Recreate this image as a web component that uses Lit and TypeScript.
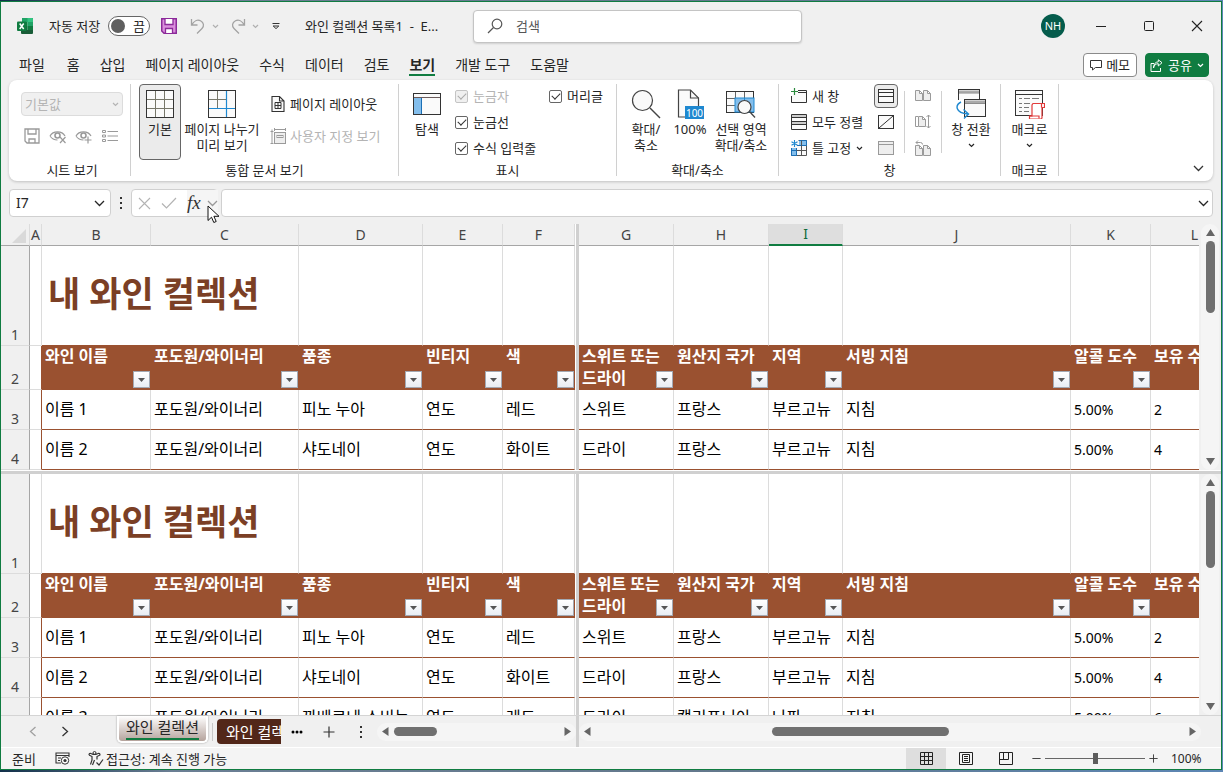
import { LitElement, html, svg, css, nothing, TemplateResult } from "lit";
import { customElement, property } from "lit/decorators.js";
import { classMap } from "lit/directives/class-map.js";
import { styleMap } from "lit/directives/style-map.js";

/* ---------- icons ---------- */

const dark = "#333";
const grey = "#9a9a9a";
const blue = "#1e88d0";

const page = (x: number, y: number, c: string) => svg`
  <path d="M${x + 0.5} ${y + 0.5}h4l3 3v7h-7zM${x + 4.5} ${y + 0.5}v3h3" fill="#eee" stroke=${c}></path>`;

const icons: Record<string, [number, number, TemplateResult]> = {
  excel: [16, 16, svg`
    <path d="M5 0h11v4H5z" fill="#21a366"/><path d="M10.500 0H15a1 1 0 0 1 1 1v3h-5.500z" fill="#33c481"/>
    <path d="M4 4h6.500v4H4z" fill="#107c41"/><path d="M10.500 4H16v4h-5.500z" fill="#21a366"/>
    <path d="M4 8h6.500v4H4z" fill="#0f6b39"/><path d="M10.500 8H16v4h-5.500z" fill="#107c41"/>
    <path d="M4 12h12v3a1 1 0 0 1-1 1H5a1 1 0 0 1-1-1z" fill="#185c37"/>
    <rect y="3.500" width="9.500" height="9.500" rx="1" fill="#107c41"/>
    <path d="M2.700 5.500l4 5.500M6.700 5.500l-4 5.500" stroke="#fff" stroke-width="1.500" fill="none"/>`],
  save: [16, 16, svg`
    <path d="M.75.75h14.500v14.500H3L.75 13z" fill="#da8fdc" stroke="#8c2a9a" stroke-width="1.500"/>
    <path d="M4 1v5.500h8V1M4.500 15v-4.500h7V15" fill="#fff" stroke="#8c2a9a" stroke-width="1.300"/>`],
  undo: [16, 16, svg`<path d="M1.500 1v6h6M1.800 6.700C4 3 7.500 1.200 10.500 2.800c3.500 1.800 3.800 5.400 1.500 7.700L7 15.500" fill="none" stroke="#a3a3a3" stroke-width="1.300"/>`],
  redo: [16, 16, svg`<path d="M14.500 1v6h-6M14.200 6.700C12 3 8.500 1.200 5.500 2.800c-3.500 1.800-3.800 5.400-1.500 7.700L9 15.500" fill="none" stroke="#a3a3a3" stroke-width="1.300"/>`],
  chevS: [7, 5, svg`<path d="M1 1l2.500 2.500L6 1" fill="none" stroke="currentColor" stroke-width="1.200"/>`],
  chev: [11, 7, svg`<path d="M1 1l4.500 4.500L10 1" fill="none" stroke="currentColor" stroke-width="1.300"/>`],
  more: [8, 8, svg`<path d="M.5 1.500h7M1.200 4L4 6.600 6.800 4z" fill="none" stroke="#333"/>`],
  search: [16, 16, svg`<circle cx="10" cy="6" r="4.800" fill="none" stroke="#555" stroke-width="1.200"/><path d="M6.500 9.500L1 15" stroke="#555" stroke-width="1.200"/>`],
  min: [12, 12, svg`<path d="M1 6.500h10" stroke="#222"/>`],
  max: [12, 12, svg`<rect x="1.500" y="1.500" width="9" height="9" rx="1" fill="none" stroke="#222"/>`],
  close: [12, 12, svg`<path d="M1 1l10 10M11 1L1 11" stroke="#222" stroke-width="1.100"/>`],
  memo: [12, 12, svg`<path d="M.5 1.500h11v7H5.500L2.500 11V8.500h-2z" fill="none" stroke="#333"/>`],
  share: [13, 13, svg`<path d="M4 4.500H1v8h9.500V9M3.500 9C4 6 6 4.700 8.300 4.700V7L12 3.700 8.300.8v2C5.500 3 3.500 5 3.500 9z" fill="none" stroke="#fff"/>`],
  svSave: [16, 16, svg`<path d="M1 1h14v14H3l-2-2zM4 1v5h8V1M5 15v-4h6v4" fill="none" stroke=${grey} stroke-width="1.300"/>`],
  eyeX: [18, 16, svg`<path d="M1 8c3-5.500 12-5.500 15 0M1 8c2 3 5 4 7.500 4" fill="none" stroke=${grey} stroke-width="1.200"/><circle cx="8.500" cy="7.500" r="2.500" fill="none" stroke=${grey} stroke-width="1.600"/><path d="M11 9l5.500 6M16.500 9L11 15" stroke=${grey} stroke-width="1.200"/>`],
  eyeP: [18, 16, svg`<path d="M1 8c3-5.500 12-5.500 15 0M1 8c2 3 5 4 7.500 4" fill="none" stroke=${grey} stroke-width="1.200"/><circle cx="8.500" cy="7.500" r="2.500" fill="none" stroke=${grey} stroke-width="1.600"/><path d="M13 8.500v7M9.500 12h7" stroke=${grey} stroke-width="1.200"/>`],
  list: [16, 14, svg`<path d="M.5 1.500h3v2h-3zM.5 6h3v2h-3zM.5 10.500h3v2h-3z" fill="none" stroke=${grey}/><path d="M5.500 2.500H16M5.500 7H16M5.500 11.500H16" stroke=${grey} stroke-width="1.200"/>`],
  normal: [28, 28, svg`<rect x=".5" y=".5" width="27" height="27" fill="#fafafa" stroke=${dark}/><path d="M9.500 1v26M18.500 1v26M1 9.500h26M1 18.500h26" stroke="#77776a"/><rect x=".5" y=".5" width="27" height="27" fill="none" stroke=${dark}/>`],
  breaks: [28, 28, svg`<rect x=".5" y=".5" width="27" height="27" fill="#fafafa"/><path d="M9.500 1v17M1 9.500h17" stroke="#77776a"/><path d="M18.500 1v26M1 18.500h26" stroke=${blue} stroke-width="1.200"/><rect x=".5" y=".5" width="27" height="27" fill="none" stroke=${dark}/>`],
  layout: [13, 16, svg`<path d="M.5.5h7.500l4.500 4.500v10.500H.5zM8 .5V5h4.500" fill="#fafafa" stroke=${dark} stroke-width="1.100"/><path d="M3.500 6.500h6v6h-6zM6.500 6.500v6M3.500 9.500h6" fill="none" stroke=${dark}/>`],
  custom: [16, 16, svg`<path d="M2 1.500v14M.5 3.500h3M.5 15.500h3M4 1.500h12M4.500 0v3M15.500 0v3" stroke=${grey} fill="none"/><rect x="4.500" y="4.500" width="11" height="11" fill="#eee" stroke=${grey}/><rect x="7" y="7.500" width="6" height="2" fill="none" stroke=${grey}/>`],
  nav: [28, 22, svg`<rect x=".5" y=".5" width="27" height="21" fill="#fafafa" stroke=${dark}/><path d="M1 4.500h26" stroke="#6b5b5b"/><rect x="1" y="5" width="8" height="16" fill="#83beec"/><path d="M8.500 5v16" stroke="#1b6fb5"/>`],
  zoom: [30, 30, svg`<circle cx="11.500" cy="11.500" r="10" fill="#fafafa" stroke="#444" stroke-width="1.200"/><path d="M19 19l10 10" stroke="#444" stroke-width="1.400"/>`],
  z100: [28, 30, svg`<path d="M2.500 1h12l8 8v19h-20z" fill="#fafafa" stroke="#444" stroke-width="1.200"/><path d="M14.500 1v8h8" fill="none" stroke="#444" stroke-width="1.200"/><rect x="9" y="17" width="19" height="13" fill=${blue}/><text x="18.500" y="27.500" font-size="10" text-anchor="middle" fill="#fff" font-family="Noto Sans">100</text>`],
  zsel: [30, 28, svg`<rect x=".5" y="1.500" width="27" height="21" fill="#fafafa" stroke=${dark}/><path d="M9.500 2v20M18.500 2v20M1 8.500h26M1 15.500h26" stroke="#666"/><rect x="9" y="8" width="19" height="14" fill="#83beec" stroke=${blue}/><path d="M18.500 8v14" stroke=${blue}/><circle cx="18.500" cy="17" r="6.500" fill="#fafafa" stroke="#444" stroke-width="1.200"/><path d="M23.500 21.500l5.500 6" stroke="#444" stroke-width="1.300"/>`],
  newWin: [16, 16, svg`<path d="M7 2.500h8.500v12H.5V8" fill="#fafafa" stroke=${dark}/><path d="M7 4.500h8.500" stroke=${dark}/><path d="M3.500 0v7M0 3.500h7" stroke="#2b8a3e" stroke-width="1.200"/>`],
  arrange: [16, 16, svg`<path d="M.5.5h15v15H.5z" fill="#fafafa" stroke=${dark}/><path d="M1 2h14M1 9h14" stroke="#ccc" stroke-width="2"/><path d="M.5 3.500h15M.5 7.500h15M.5 10.500h15" stroke=${dark}/>`],
  freeze: [16, 16, svg`<path d="M7.500.5h8v15H.5V8" fill="#fafafa" stroke="#555"/><path d="M8 .5h7.500v5H8z" fill="#83beec"/><path d="M.5 8h5v7.500h-5z" fill="#83beec"/><path d="M6 5.500h9.500M8 .5h7.500v5M.5 8v7.500h5M5.500 8v7.500M.5 10.500h5" fill="none" stroke="#1b6fb5"/><path d="M5.500 10.500h10M10.500 5.500v10M10.500 .5v5" stroke="#555"/><path d="M3.500 0v7M.5 1.700l6 3.600M6.500 1.700l-6 3.600" stroke=${blue} stroke-width="1.100"/>`],
  split: [16, 14, svg`<rect x=".5" y=".5" width="15" height="13" fill="#fafafa" stroke=${dark}/><path d="M1 3.500h14M1 7.500h14" stroke=${dark}/>`],
  hide: [16, 14, svg`<rect x=".5" y=".5" width="15" height="13" fill="#fafafa" stroke=${dark}/><path d="M1 13L15 1" stroke=${dark}/>`],
  unhide: [16, 14, svg`<rect x=".5" y=".5" width="15" height="13" fill="#eee" stroke=${grey}/><path d="M1 3.500h14" stroke=${grey}/>`],
  side: [16, 12, svg`${page(0, 0, grey)}${page(8, 0, grey)}`],
  sync: [16, 16, svg`<path d="M3 2.500H.5v10H3" fill="none" stroke=${grey}/>${page(3, 2, grey)}<path d="M13.500 1v13M11.500 3l2-2 2 2M11.500 12l2 2 2-2" fill="none" stroke=${grey}/>`],
  reset: [16, 16, svg`${page(0, 5, grey)}${page(8, 5, grey)}<path d="M1 2.500h4.500q2 0 2 2M3 .5l-2 2 2 2" fill="none" stroke=${grey}/>`],
  switch: [30, 30, svg`<rect x="2.500" y=".5" width="21" height="15" fill="#fafafa" stroke=${dark}/><path d="M3 2.500h20" stroke="#aaa" stroke-width="2"/><path d="M3 4h20" stroke=${dark} stroke-width=".6"/><path d="M1 11h10v14H1z" fill="#fff"/><rect x="8.500" y="10.500" width="21" height="17" fill="#fafafa" stroke=${dark}/><path d="M9 12.500h20" stroke="#aaa" stroke-width="2"/><path d="M9 14.200h20" stroke=${dark} stroke-width=".8"/><path d="M5 13C-1 16-1 24 12 25M7.500 20.500L12.500 25 8 29.500" fill="none" stroke=${blue} stroke-width="1.400"/>`],
  macro: [30, 30, svg`<rect x=".5" y="1.500" width="27" height="25" fill="#fafafa" stroke=${dark}/><path d="M1 5.500h26" stroke=${dark}/><path d="M4 9.500h3M9 9.500h6M17 9.500h7M4 14.500h3M9 14.500h6M4 18.500h3M9 18.500h5M4 22.500h3M9 22.500h5" stroke="#777"/><path d="M18 14.500h11.500v4H27v10q0 1.500-1.500 1.500H14.500v-3H17V16z" fill="#fff" stroke="#e23b3b" stroke-width="1.200"/><path d="M18 14.500h8.500v4M14.500 27H24v2.500" fill="none" stroke="#e23b3b" stroke-width="1.200"/>`],
  cancel: [13, 13, svg`<path d="M1 1l11 11M12 1L1 12" stroke="#b3b3b3" stroke-width="1.100"/>`],
  accept: [16, 12, svg`<path d="M1 6.500L5.500 11 15 1" fill="none" stroke="#b3b3b3" stroke-width="1.200"/>`],
  dots: [4, 14, svg`<path d="M1 2h2M1 7h2M1 12h2" stroke="#333" stroke-width="2"/>`],
  left: [8, 11, svg`<path d="M6.500 1L1.500 5.500l5 4.500" fill="none" stroke="#a0a0a0" stroke-width="1.300"/>`],
  right: [8, 11, svg`<path d="M1.500 1l5 4.500-5 4.500" fill="none" stroke="#333" stroke-width="1.300"/>`],
  ell: [12, 4, svg`<circle cx="2" cy="2" r="1.500"/><circle cx="6" cy="2" r="1.500"/><circle cx="10" cy="2" r="1.500"/>`],
  plus: [12, 12, svg`<path d="M6 .5v11M.5 6h11" stroke="#333" stroke-width="1.200"/>`],
  minus: [12, 12, svg`<path d="M.5 6h11" stroke="#333" stroke-width="1.200"/>`],
  triL: [7, 9, svg`<path d="M6.500 0v9L0 4.500z" fill="#666"/>`],
  triR: [7, 9, svg`<path d="M.5 0v9L7 4.500z" fill="#666"/>`],
  triU: [9, 7, svg`<path d="M0 7h9L4.500 0z" fill="#666"/>`],
  triD: [9, 7, svg`<path d="M0 0h9L4.500 7z" fill="#666"/>`],
  filter: [7, 4, svg`<path d="M0 0h7L3.500 4z" fill="#555"/>`],
  corner: [14, 14, svg`<path d="M14 0v14H0z" fill="#d9d9d9"/>`],
  record: [15, 13, svg`<path d="M14 5V1H1v10h5M1 3.500h13M3 6h3M3 8.500h2" fill="none" stroke="#333" stroke-width="1.100"/><circle cx="10" cy="8.500" r="3.700" fill="#fff" stroke="#333"/><circle cx="10" cy="8.500" r="1.600" fill="#333"/>`],
  access: [16, 15, svg`<path d="M1 4c0-1.500 1-2 2-1.500l2 .8h3l2-.8c1-.5 2 0 2 1.500L9 5.500v3M1 4l3 1.500V9l-1.500 4.500M6.500 9l-2 5" fill="none" stroke="#333" stroke-width="1.200"/><circle cx="6.500" cy="2" r="1.500" fill="none" stroke="#333"/><path d="M8.500 11.500l2.500 2.500 4-5.500" fill="none" stroke="#333" stroke-width="1.200"/>`],
  vNormal: [13, 13, svg`<path d="M.5.5h12v12H.5zM4.500.5v12M8.500.5v12M.5 4.500h12M.5 8.500h12" fill="none" stroke="#222"/>`],
  vPage: [14, 13, svg`<path d="M.5.5h13v12H.5zM3.500 2.500h7v8h-7zM5 4.500h4M5 6.500h4M5 8.500h4" fill="none" stroke="#222"/>`],
  vBreak: [14, 13, svg`<path d="M.5.5h13v12H.5zM.5 7.500h9M4.500.5v7M9.500.5v7" fill="none" stroke="#222"/>`],
  pointer: [13, 19, svg`<path d="M1 1v14.500l3.500-3.300 2.300 5.300 2.400-1-2.300-5.200H12z" fill="#fff" stroke="#111"/>`],
};

const icon = (name: string) => {
  const [w, h, body] = icons[name];
  return html`<svg width=${w} height=${h} viewBox="0 0 ${w} ${h}" aria-hidden="true">${body}</svg>`;
};

const base = css`
  :host {
    display: block;
    box-sizing: border-box;
    min-width: 0;
  }
  * {
    box-sizing: border-box;
  }
  svg {
    display: block;
    flex: none;
  }
  button,
  input,
  select {
    font: inherit;
    color: inherit;
    margin: 0;
    padding: 0;
    border: 0;
    background: none;
    border-radius: 0;
    outline: none;
  }
  button {
    display: flex;
    align-items: center;
    justify-content: center;
    white-space: nowrap;
  }
`;

/* ---------- title bar and tabs ---------- */

@customElement("title-bar")
class TitleBar extends LitElement {
  static styles = [base, css`
    .bar { display: flex; align-items: center; height: 48px; }
    .left { display: flex; align-items: center; width: 472px; flex: none; padding-left: 16px; }
    .label { margin: 0 7px 0 16px; width: 52px; white-space: nowrap; }
    .toggle { display: flex; align-items: center; gap: 8px; width: 42px; height: 20px; padding: 0 2px; border: 1px solid #666; border-radius: 10px; background: #fff; }
    .knob { appearance: none; width: 14px; height: 14px; border-radius: 7px; background: #5f5f5f; flex: none; }
    .save { margin: 0 13px 0 11px; }
    .dim { color: #b0b0b0; margin: 0 11px 0 6px; }
    .more { margin: 0 25px 0 2px; }
    .name { white-space: pre; }
    .search { display: flex; align-items: center; gap: 13px; width: 329px; height: 33px; padding: 0 13px; background: #fff; border: 1px solid #c4c4c4; border-radius: 4px; box-shadow: 0 1px 2px #0002; }
    .search input { flex: 1; min-width: 0; }
    .search input::placeholder { color: #555; opacity: 1; }
    .space { flex: 1; }
    .avatar { width: 24px; height: 24px; border-radius: 12px; background: #055c4c; color: #fff; font-size: 11px; margin-right: 12px; }
    .win { width: 48px; height: 32px; }
    .tabs { display: flex; align-items: center; gap: 20px; height: 30px; padding: 0 12px 0 18px; font-size: 14px; }
    .tab { height: 22px; padding-top: 2px; line-height: 18px; border-bottom: 2px solid transparent; }
    .tab.first { margin-right: 2px; }
    .tab.on { font-weight: 700; border-color: #107c41; }
    .actions { display: flex; gap: 8px; margin-left: auto; }
    .act { height: 24px; border: 1px solid #8a8a8a; border-radius: 4px; background: #fff; padding: 0 6px; gap: 4px; font-size: 13px; }
    .act.share { background: #107c41; border-color: #107c41; color: #fff; padding: 0 4px; gap: 5px; }
  `];
  render() {
    const tabs = ["파일", "홈", "삽입", "페이지 레이아웃", "수식", "데이터", "검토", "보기", "개발 도구", "도움말"];
    return html`
      <header class="bar">
        <div class="left">
          ${icon("excel")}
          <label class="label" for="auto">자동 저장</label>
          <label class="toggle"><input id="auto" class="knob" type="checkbox" role="switch" />끔</label>
          <button class="save" aria-label="저장">${icon("save")}</button>
          <button aria-label="실행 취소">${icon("undo")}</button>
          <button class="dim" aria-label="실행 취소 목록">${icon("chevS")}</button>
          <button aria-label="다시 실행">${icon("redo")}</button>
          <button class="dim" aria-label="다시 실행 목록">${icon("chevS")}</button>
          <button class="more" aria-label="빠른 실행 도구 모음">${icon("more")}</button>
          <span class="name">와인 컬렉션 목록1  -  E...</span>
        </div>
        <label class="search">${icon("search")}<input type="search" placeholder="검색" aria-label="검색" /></label>
        <div class="space"></div>
        <button class="avatar">NH</button>
        <button class="win" aria-label="최소화">${icon("min")}</button>
        <button class="win" aria-label="최대화">${icon("max")}</button>
        <button class="win" aria-label="닫기">${icon("close")}</button>
      </header>
      <nav class="tabs">
        ${tabs.map((t, i) => html`<button class=${classMap({ tab: true, first: i === 0, on: t === "보기" })}>${t}</button>`)}
        <div class="actions">
          <button class="act">${icon("memo")}메모</button>
          <button class="act share">${icon("share")}공유${icon("chevS")}</button>
        </div>
      </nav>`;
  }
}

/* ---------- ribbon ---------- */

@customElement("ribbon-bar")
class RibbonBar extends LitElement {
  static styles = [base, css`
    .ribbon { display: flex; height: 101px; margin: 0 8px; padding: 4px 0 0; background: #fff; border-radius: 8px; box-shadow: 0 1px 3px #0003; }
    .group { display: flex; flex-direction: column; flex: none; height: 92px; border-right: 1px solid #d0d0d0; }
    .body { display: flex; flex: 1; align-items: flex-start; }
    .cap { height: 16px; line-height: 16px; text-align: center; margin-bottom: -2px; }
    .g1 { width: 122px; } .g2 { width: 268px; } .g3 { width: 218px; }
    .g4 { width: 162px; } .g5 { width: 222px; } .g6 { width: 58px; }
    .g1 .body { flex-direction: column; padding: 8px 7px 0 12px; }
    .g1 .cap { padding-left: 5px; }
    .select { position: relative; width: 102px; color: #b4b4b4; }
    .select select { appearance: none; width: 100%; height: 24px; padding: 0 3px; background: #f0f0f0; border: 1px solid #dcdcdc; border-radius: 4px; opacity: 1; }
    .select svg { position: absolute; right: 4px; top: 10px; }
    .views { display: flex; justify-content: space-between; align-items: center; width: 94px; height: 16px; margin: 12px 0 0 3px; }
    .big { flex-direction: column; justify-content: flex-start; gap: 2px; line-height: 16px; height: 76px; padding-top: 4px; border: 1px solid transparent; border-radius: 4px; }
    .pic { display: flex; align-items: center; justify-content: center; height: 30px; }
    .chev { margin-top: 4px; }
    .sel { border-color: #666; background: #ebebeb; }
    .g2 .body { padding-left: 8px; }
    .g5 .body { padding-left: 12px; }
    .w30 { width: 30px; } .w42 { width: 42px; } .w56 { width: 56px; } .w58 { width: 58px; } .w72 { width: 72px; } .w82 { width: 82px; }
    .col { display: flex; flex-direction: column; }
    .views2 { padding: 4px 0 0 7px; }
    .views2 button { height: 32px; gap: 4px; justify-content: flex-start; }
    .views2 svg { width: 16px; }
    .off { color: #b4b4b4; }
    .checks { display: grid; grid-template-columns: 94px auto; grid-auto-rows: 26px; align-items: center; white-space: nowrap; }
    .check { display: flex; align-items: center; gap: 5px; height: 24px; align-self: start; }
    .check input { appearance: none; width: 13px; height: 13px; border: 1px solid #666; border-radius: 2px; display: grid; place-items: center; flex: none; }
    .check input::before { content: ""; width: 7px; height: 4px; border: solid #333; border-width: 0 0 1px 1px; transform: rotate(-45deg) translate(1px, -1px); }
    .check.off input { border-color: #c4c4c4; background: #f0f0f0; }
    .check.off input::before { border-color: #aaa; }
    .rows { gap: 2px; }
    .rows button { height: 24px; gap: 5px; justify-content: flex-start; }
    .rows.narrow button { width: 24px; justify-content: center; border: 1px solid transparent; border-radius: 4px; }
    .rows.narrow .sel { border-color: #666; }
    .first { width: 83px; }
    .line { width: 1px; height: 62px; margin: 7px 0 0 6px; background: #d0d0d0; }
    .l1 { margin-right: 6px; }
    .collapse { margin: auto 9px 9px auto; color: #333; }
  `];
  big(name: string, cls: string, lines: string[], chev = false) {
    return html`<button class="big ${cls}">
      <span class="pic">${icon(name)}</span>
      <span>${lines.map((l, i) => html`${i ? html`<br />` : nothing}${l}`)}</span>
      ${chev ? html`<span class="chev">${icon("chevS")}</span>` : nothing}
    </button>`;
  }
  check(text: string, off = false) {
    return html`<label class="check ${off ? "off" : ""}"><input type="checkbox" checked ?disabled=${off} />${text}</label>`;
  }
  render() {
    return html`<section class="ribbon">
      <div class="group g1">
        <div class="body">
          <div class="select"><select disabled aria-label="시트 보기"><option>기본값</option></select>${icon("chevS")}</div>
          <div class="views">${["svSave", "eyeX", "eyeP", "list"].map((n) => html`<button disabled>${icon(n)}</button>`)}</div>
        </div>
        <div class="cap">시트 보기</div>
      </div>
      <div class="group g2">
        <div class="body">
          ${this.big("normal", "w42 sel", ["기본"])}
          ${this.big("breaks", "w82", ["페이지 나누기", "미리 보기"])}
          <div class="col views2">
            <button>${icon("layout")}페이지 레이아웃</button>
            <button class="off" disabled>${icon("custom")}사용자 지정 보기</button>
          </div>
        </div>
        <div class="cap">통합 문서 보기</div>
      </div>
      <div class="group g3">
        <div class="body">
          ${this.big("nav", "w56", ["탐색"])}
          <div class="checks">
            ${this.check("눈금자", true)}${this.check("머리글")}
            ${this.check("눈금선")}<span></span>
            ${this.check("수식 입력줄")}
          </div>
        </div>
        <div class="cap">표시</div>
      </div>
      <div class="group g4">
        <div class="body">
          ${this.big("zoom", "w58", ["확대/", "축소"])}
          ${this.big("z100", "w30", ["100%"])}
          ${this.big("zsel", "w72", ["선택 영역", "확대/축소"])}
        </div>
        <div class="cap">확대/축소</div>
      </div>
      <div class="group g5">
        <div class="body">
          <div class="col rows first">
            <button>${icon("newWin")}새 창</button>
            <button>${icon("arrange")}모두 정렬</button>
            <button>${icon("freeze")}틀 고정 ${icon("chevS")}</button>
          </div>
          <div class="col rows narrow">
            <button class="sel" aria-label="나누기">${icon("split")}</button>
            <button aria-label="숨기기">${icon("hide")}</button>
            <button disabled aria-label="숨기기 취소">${icon("unhide")}</button>
          </div>
          <div class="line l1"></div>
          <div class="col rows narrow">
            ${["side", "sync", "reset"].map((n) => html`<button disabled>${icon(n)}</button>`)}
          </div>
          <div class="line"></div>
          ${this.big("switch", "w58", ["창 전환"], true)}
        </div>
        <div class="cap">창</div>
      </div>
      <div class="group g6">
        <div class="body">${this.big("macro", "w58", ["매크로"], true)}</div>
        <div class="cap">매크로</div>
      </div>
      <button class="collapse" aria-label="리본 접기">${icon("chev")}</button>
    </section>`;
  }
}

/* ---------- formula bar ---------- */

@customElement("formula-bar")
class FormulaBar extends LitElement {
  static styles = [base, css`
    .row { display: flex; align-items: center; height: 28px; margin: 8px 8px 7px; }
    .box { display: flex; align-items: center; height: 28px; border: 1px solid #d0d0d0; border-radius: 4px; background: #fff; }
    .name { width: 102px; padding: 0 5px 0 6px; font-size: 14px; }
    .name input { flex: 1; min-width: 0; }
    .dots { width: 20px; display: flex; justify-content: center; }
    .tools { position: relative; width: 87px; padding-left: 6px; gap: 10px; margin-right: 3px; }
    .tools .fx { align-self: stretch; flex: 1; gap: 6px; background: #f5f5f5; font: italic 19px "Liberation Serif", serif; color: #333; }
    .fx svg { color: #999; }
    .pointer { position: absolute; left: 75px; top: 15px; }
    .input { flex: 1; min-width: 0; padding: 0 3px 0 8px; }
    .input input { flex: 1; min-width: 0; }
  `];
  render() {
    return html`<div class="row">
      <div class="box name"><input aria-label="이름 상자" .value=${"I7"} /><button aria-label="이름 목록">${icon("chev")}</button></div>
      <span class="dots">${icon("dots")}</span>
      <div class="box tools">
        <button disabled aria-label="취소">${icon("cancel")}</button>
        <button disabled aria-label="입력">${icon("accept")}</button>
        <button class="fx" aria-label="함수 삽입">fx${icon("chev")}</button>
        <span class="pointer">${icon("pointer")}</span>
      </div>
      <div class="box input"><input aria-label="수식 입력줄" /><button aria-label="수식 입력줄 확장">${icon("chev")}</button></div>
    </div>`;
  }
}

/* ---------- worksheet ---------- */

interface Column { id: string; width: number; title: string; cells: string[]; }

const leftCols: Column[] = [
  { id: "B", width: 109, title: "와인 이름", cells: ["이름 1", "이름 2", "이름 3"] },
  { id: "C", width: 148, title: "포도원/와이너리", cells: ["포도원/와이너리", "포도원/와이너리", "포도원/와이너리"] },
  { id: "D", width: 124, title: "품종", cells: ["피노 누아", "샤도네이", "까베르네 소비뇽"] },
  { id: "E", width: 80, title: "빈티지", cells: ["연도", "연도", "연도"] },
  { id: "F", width: 72, title: "색", cells: ["레드", "화이트", "레드"] },
];
const rightCols: Column[] = [
  { id: "G", width: 95, title: "스위트 또는 드라이", cells: ["스위트", "드라이", "드라이"] },
  { id: "H", width: 95, title: "원산지 국가", cells: ["프랑스", "프랑스", "캘리포니아"] },
  { id: "I", width: 74, title: "지역", cells: ["부르고뉴", "부르고뉴", "나파"] },
  { id: "J", width: 228, title: "서빙 지침", cells: ["지침", "지침", "지침"] },
  { id: "K", width: 80, title: "알콜 도수", cells: ["5.00%", "5.00%", "5.00%"] },
  { id: "L", width: 0, title: "보유 수량", cells: ["2", "4", "6"] },
];

@customElement("sheet-pane")
class SheetPane extends LitElement {
  @property({ attribute: false }) cols: Column[] = [];
  @property({ type: Boolean }) letters = false;
  @property({ type: Boolean }) lead = false;
  @property({ type: Number }) count = 2;
  static styles = [base, css`
    :host { overflow: hidden; background: #fff; }
    table { table-layout: fixed; border-collapse: separate; border-spacing: 0; width: 574px; font-size: 16px; line-height: 22px; color: #000; }
    table.right { width: 100%; min-width: 660px; }
    th, td { padding: 0 0 2px 3px; text-align: left; font-weight: 400; white-space: nowrap; border-right: 1px solid #dcdcdc; overflow: hidden; vertical-align: middle; }
    .num { font-size: 14px; padding-bottom: 0; }
    .letter { height: 22px; line-height: 20px; padding: 0; text-align: center; font-size: 14px; color: #444; background: #f0f0f0; border-bottom: 1px solid #a6a6a6; }
    .letter.on { background: #dedede; color: #0f6b39; border-bottom: 2px solid #107c41; line-height: 18px; }
    .corner svg { margin: 3px 0 0 11px; }
    .rownum { padding: 0; text-align: center; vertical-align: bottom; font-size: 14px; line-height: 20px; color: #444; background: #f0f0f0; border-right-color: #a6a6a6; border-bottom: 1px solid #dcdcdc; }
    .a { border-bottom: 1px solid #dcdcdc; padding: 0; }
    .r3 .a, .r2 .a { border-right-color: #9a5130; }
    .r1 td, .r1 th { height: 100px; }
    .r1 .cell { border-bottom: 1px solid #9a5130; }
    .r1 .title { font-size: 35px; line-height: 48px; font-weight: 700; color: #7b3f25; padding: 0 0 4px 6px; }
    .r2 > * { height: 44px; }
    .head { position: relative; vertical-align: top; padding: 0 0 0 3px; background: #9a5130; border-right-color: #9a5130; color: #fff; font-weight: 700; white-space: normal; }
    .head span { display: block; margin-top: -1px; }
    .one { white-space: nowrap; }
    .filter { position: absolute; right: 0; bottom: 2px; width: 17px; height: 17px; border: 1px solid #a3a9b3; background: linear-gradient(#fff, #e9edf3); }
    .r3 > * { height: 40px; }
    .r3 .cell { border-bottom: 1px solid #9a5130; }
  `];
  render() {
    const { cols, lead } = this;
    const rn = (n: number) => (lead ? html`<th class="rownum" scope="row">${n}</th><td class="a"></td>` : nothing);
    return html`<table class=${lead ? "" : "right"}>
      <colgroup>
        ${lead ? html`<col style=${styleMap({ width: "29px" })} /><col style=${styleMap({ width: "12px" })} />` : nothing}
        ${cols.map((c) => html`<col style=${styleMap({ width: c.width ? `${c.width}px` : "auto" })} />`)}
      </colgroup>
      ${this.letters
        ? html`<thead><tr>
            ${lead ? html`<th class="letter corner">${icon("corner")}</th><th class="letter">A</th>` : nothing}
            ${cols.map((c) => html`<th class=${classMap({ letter: true, on: c.id === "I" })}>${c.id}</th>`)}
          </tr></thead>`
        : nothing}
      <tbody>
        <tr class="r1">${rn(1)}
          ${lead ? html`<td class="cell title" colspan="2">내 와인 컬렉션</td>` : nothing}
          ${cols.slice(lead ? 2 : 0).map(() => html`<td class="cell"></td>`)}
        </tr>
        <tr class="r2">${rn(2)}
          ${cols.map((c) => html`<th class=${classMap({ head: true, one: c.id !== "G" })}><span>${c.title}</span>${c.width ? html`<button class="filter" aria-label="${c.title} 필터">${icon("filter")}</button>` : nothing}</th>`)}
        </tr>
        ${Array.from({ length: this.count }, (_, i) => html`<tr class="r3">${rn(i + 3)}
          ${cols.map((c) => html`<td class=${classMap({ cell: true, num: c.id === "K" || c.id === "L" })}>${c.cells[i]}</td>`)}
        </tr>`)}
      </tbody>
    </table>`;
  }
}

@customElement("scroll-rail")
class ScrollRail extends LitElement {
  @property({ type: Boolean, reflect: true }) vertical = false;
  @property({ type: Number }) start = 0;
  @property({ type: Number }) size = 20;
  static styles = [base, css`
    .rail { display: flex; align-items: center; gap: 5px; height: 18px; padding: 0 5px; background: #f5f5f5; border-radius: 9px; }
    .track { flex: 1; display: flex; align-self: stretch; align-items: center; }
    .thumb { height: 9px; border-radius: 5px; background: #707070; flex: none; }
    :host([vertical]) { display: flex; }
    :host([vertical]) .rail { flex-direction: column; width: 18px; height: auto; flex: none; padding: 5px 0; }
    :host([vertical]) .track { flex-direction: column; align-self: center; }
    :host([vertical]) .thumb { width: 9px; height: auto; }
  `];
  render() {
    const v = this.vertical;
    const pad = { [v ? "height" : "width"]: `${this.start}%`, flex: "none" };
    const thumb = { [v ? "height" : "width"]: `${this.size}%` };
    return html`<div class="rail">
      <button aria-label="이전">${icon(v ? "triU" : "triL")}</button>
      <div class="track"><span style=${styleMap(pad)}></span><div class="thumb" style=${styleMap(thumb)}></div></div>
      <button aria-label="다음">${icon(v ? "triD" : "triR")}</button>
    </div>`;
  }
}

@customElement("work-sheet")
class WorkSheet extends LitElement {
  static styles = [base, css`
    :host { display: flex; flex-direction: column; flex: 1; min-height: 0; }
    .band { display: grid; grid-template-columns: 575px 3px minmax(0, 1fr) 22px; min-height: 0; }
    .top { border-bottom: 1px solid #fff; flex: none; }
    .bottom { flex: 1; grid-template-rows: minmax(0, 1fr); border-bottom: 1px solid #d4d4d4; }
    .vbar { background: #d0d0d0; }
    .hbar { height: 3px; background: #d0d0d0; }
    .side { padding: 0 2px; display: flex; background: #f0f0f0; }
    .side > * { flex: 1; }
  `];
  render() {
    return html`
      <div class="band top">
        <sheet-pane .cols=${leftCols} letters lead></sheet-pane>
        <div class="vbar"></div>
        <sheet-pane .cols=${rightCols} letters></sheet-pane>
        <div class="side"><scroll-rail vertical .start=${0} .size=${34}></scroll-rail></div>
      </div>
      <div class="hbar"></div>
      <div class="band bottom">
        <sheet-pane .cols=${leftCols} lead .count=${3}></sheet-pane>
        <div class="vbar"></div>
        <sheet-pane .cols=${rightCols} .count=${3}></sheet-pane>
        <div class="side"><scroll-rail vertical .start=${0} .size=${37}></scroll-rail></div>
      </div>`;
  }
}

/* ---------- sheet tabs and status bar ---------- */

@customElement("sheet-footer")
class SheetFooter extends LitElement {
  static styles = [base, css`
    .row { display: grid; grid-template-columns: 575px 3px minmax(0, 1fr) 20px; align-items: stretch; height: 31px; }
    .left { display: flex; align-items: center; padding-left: 28px; min-width: 0; }
    .next { margin: 0 48px 0 24px; }
    .tab { align-self: flex-start; font-size: 15px; line-height: 20px; height: 27px; }
    .active { width: 91px; border: 2px solid #fff; border-top: 0; border-radius: 0 0 5px 5px; background: linear-gradient(#fff, #b5a39c); box-shadow: 0 0 2px #0006; }
    .active span { border-bottom: 2px solid #107c41; height: 22px; line-height: 18px; }
    .sep { width: 1px; height: 18px; margin: 0 4px; background: #c8c8c8; }
    .brown { width: 64px; height: 25px; margin-top: 3px; padding-left: 9px; justify-content: flex-start; overflow: hidden; background: #522719; color: #fff; border-radius: 4px 0 0 4px; }
    .ell { margin: 0 20px 0 10px; }
    .dots { margin: 0 14px 0 24px; }
    scroll-rail { flex: 1; align-self: center; }
    .vbar { background: #d0d0d0; }
    .status { display: flex; align-items: center; height: 22px; padding: 0 18px 0 11px; background: #f4f4f4; border-top: 1px solid #fff; }
    .rec { margin: 0 18px 0 19px; }
    .acc { gap: 2px; }
    .right { display: flex; align-items: center; align-self: stretch; margin-left: auto; }
    .view { width: 40px; align-self: stretch; }
    .view.on { background: #dedede; }
    .zoom { appearance: none; width: 100px; height: 12px; margin: 0 4px; background: linear-gradient(#666, #666) center / 100% 1px no-repeat; }
    .zoom::-webkit-slider-thumb { appearance: none; width: 5px; height: 11px; background: #5c5c5c; }
    .sign { width: 9px; }
    .sign svg { width: 9px; height: 9px; }
    .out { margin-left: 6px; }
    .pct { margin-left: 13px; width: 32px; font-size: 12px; }
  `];
  render() {
    return html`
      <div class="row">
        <div class="left">
          <button aria-label="이전 시트">${icon("left")}</button>
          <button class="next" aria-label="다음 시트">${icon("right")}</button>
          <button class="tab active"><span>와인 컬렉션</span></button>
          <span class="sep"></span>
          <button class="tab brown">와인 컬렉션</button>
          <button class="ell" aria-label="시트 더 보기">${icon("ell")}</button>
          <button aria-label="새 시트">${icon("plus")}</button>
          <span class="dots">${icon("dots")}</span>
          <scroll-rail .start=${0} .size=${26}></scroll-rail>
        </div>
        <div class="vbar"></div>
        <scroll-rail .start=${30} .size=${30}></scroll-rail>
      </div>
      <footer class="status">
        <span>준비</span>
        <button class="rec" aria-label="매크로 기록">${icon("record")}</button>
        <button class="acc">${icon("access")}접근성: 계속 진행 가능</button>
        <div class="right">
          <button class="view on" aria-label="기본">${icon("vNormal")}</button>
          <button class="view" aria-label="페이지 레이아웃">${icon("vPage")}</button>
          <button class="view" aria-label="페이지 나누기 미리 보기">${icon("vBreak")}</button>
          <button class="sign out" aria-label="축소">${icon("minus")}</button>
          <input class="zoom" type="range" min="0" max="100" value="50" aria-label="확대/축소" />
          <button class="sign" aria-label="확대">${icon("plus")}</button>
          <span class="pct">100%</span>
        </div>
      </footer>`;
  }
}

@customElement("app-root")
class AppRoot extends LitElement {
  static styles = [base, css`
    :host {
      height: 100vh;
      min-height: 480px;
      padding: 1px 1px 2px 0;
      background: linear-gradient(90deg, #12304a 0%, #6b7f94 14%, #63788c 60%, #5c86b4 100%);
      font: 13px/18px "Noto Sans", "Noto Sans CJK KR", sans-serif;
      color: #262626;
      overflow: hidden;
    }
    .window { display: flex; flex-direction: column; height: 100%; border: 1px solid #107c41; background: #f0f0f0; }
  `];
  render() {
    return html`<main class="window">
      <title-bar></title-bar>
      <ribbon-bar></ribbon-bar>
      <formula-bar></formula-bar>
      <work-sheet></work-sheet>
      <sheet-footer></sheet-footer>
    </main>`;
  }
}
